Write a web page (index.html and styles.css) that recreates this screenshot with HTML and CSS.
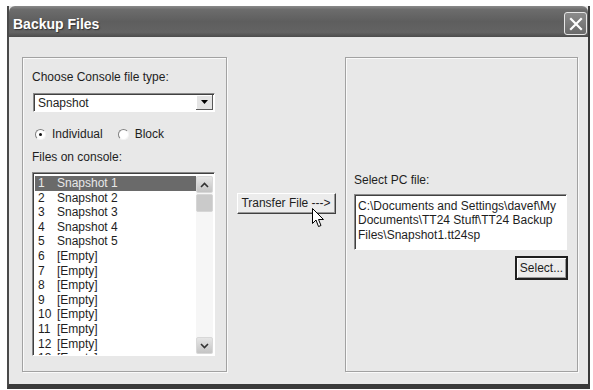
FILE: index.html
```html
<!DOCTYPE html>
<html>
<head>
  <title>Backup Files</title>
  <link rel="stylesheet" href="styles.css">
</head>
<body>
  <div class="window">
    <!-- Title bar -->
    <div class="titlebar">
      <span class="title">Backup Files</span>
      <div class="close-btn">
        <svg width="14" height="14" viewBox="0 0 14 14">
          <path d="M2 2 L12 12 M12 2 L2 12" stroke="#fff" stroke-width="2.2" stroke-linecap="square"/>
        </svg>
      </div>
    </div>

    <div class="client">
      <!-- LEFT: console files -->
      <div class="group left-group">
        <div class="label">Choose Console file type:</div>
        <div class="combo">
          <span class="combo-text">Snapshot</span>
          <span class="combo-btn">
            <svg width="7" height="4" viewBox="0 0 7 4"><path d="M0 0 H7 L3.5 4 Z" fill="#000"/></svg>
          </span>
        </div>

        <div class="radio-row">
          <span class="radio checked"></span><span class="radio-label">Individual</span>
          <span class="radio"></span><span class="radio-label">Block</span>
        </div>

        <div class="label files-label">Files on console:</div>
        <div class="listbox">
          <div class="list-rows">
            <div class="row selected"><span class="num">1</span>Snapshot 1</div>
            <div class="row"><span class="num">2</span>Snapshot 2</div>
            <div class="row"><span class="num">3</span>Snapshot 3</div>
            <div class="row"><span class="num">4</span>Snapshot 4</div>
            <div class="row"><span class="num">5</span>Snapshot 5</div>
            <div class="row"><span class="num">6</span>[Empty]</div>
            <div class="row"><span class="num">7</span>[Empty]</div>
            <div class="row"><span class="num">8</span>[Empty]</div>
            <div class="row"><span class="num">9</span>[Empty]</div>
            <div class="row"><span class="num">10</span>[Empty]</div>
            <div class="row"><span class="num">11</span>[Empty]</div>
            <div class="row"><span class="num">12</span>[Empty]</div>
            <div class="row"><span class="num">13</span>[Empty]</div>
          </div>
          <div class="scrollbar">
            <div class="sb-btn">
              <svg width="9" height="6" viewBox="0 0 9 6"><path d="M1 5 L4.5 1.5 L8 5" fill="none" stroke="#333" stroke-width="1.6"/></svg>
            </div>
            <div class="sb-thumb"></div>
            <div class="sb-track"></div>
            <div class="sb-btn">
              <svg width="9" height="6" viewBox="0 0 9 6"><path d="M1 1 L4.5 4.5 L8 1" fill="none" stroke="#333" stroke-width="1.6"/></svg>
            </div>
          </div>
        </div>
      </div>

      <!-- MIDDLE: transfer -->
      <div class="middle">
        <div class="button transfer-btn">Transfer File ---&gt;</div>
        <svg class="cursor" width="13" height="20" viewBox="0 0 13 20">
          <path d="M0.5 0.5 L0.5 15.5 L4 12 L6.5 18.5 L9 17.5 L6.5 11.5 L11.5 11.5 Z" fill="#fff" stroke="#000" stroke-width="1"/>
        </svg>
      </div>

      <!-- RIGHT: PC file -->
      <div class="group right-group">
        <div class="label">Select PC file:</div>
        <div class="textbox">C:\Documents and Settings\davef\My<br>Documents\TT24 Stuff\TT24 Backup<br>Files\Snapshot1.tt24sp</div>
        <div class="select-row">
          <div class="button select-btn">Select...</div>
        </div>
      </div>
    </div>
  </div>
</body>
</html>
```

FILE: styles.css
```css
body {
  margin: 0;
  background: #ffffff;
  font-family: "Liberation Sans", Arial, sans-serif;
  font-size: 12px;
  color: #1e1e1e;
  overflow: hidden;
}

.window {
  margin: 6px 3px 0 7px;
  width: 583px;
  background: #e8e8e8;
  border-left: 2px solid #4a4a4a;
  border-right: 2px solid #3a3a3a;
  border-bottom: 5px solid #3a3a3a;
  box-sizing: border-box;
}

/* Title bar */
.titlebar {
  height: 31px;
  display: flex;
  align-items: center;
  justify-content: space-between;
  padding: 0 1px 0 4px;
  background: linear-gradient(#8a8a8a 0%, #6c6c6c 12%, #5e5e5e 50%, #636363 85%, #4c4c4c 100%);
  border-radius: 6px 6px 0 0;
}

.title {
  font-weight: bold;
  font-size: 14px;
  color: #ffffff;
  text-shadow: 1px 1px 1px #333;
  padding-top: 5px;
}

.close-btn {
  width: 21px;
  height: 21px;
  margin-top: 4px;
  border: 1px solid #e6e6e6;
  border-radius: 3px;
  background: linear-gradient(#8c8c8c, #6a6a6a);
  display: flex;
  align-items: center;
  justify-content: center;
}

/* Dialog body */
.client {
  display: flex;
  padding: 20px 10px 12px 13px;
}

.group {
  border: 1px solid #a2a2a2;
  box-shadow: inset 1px 1px 0 #fafafa, 1px 1px 0 #fafafa;
  height: 315px;
  box-sizing: border-box;
}

.left-group {
  width: 205px;
  padding: 12px 11px 0 9px;
}

.label {
  line-height: 15px;
}

.combo {
  margin: 8px 0 0 1px;
  height: 19px;
  display: flex;
  background: #fff;
  border-top: 1px solid #8a8a8a;
  border-left: 1px solid #8a8a8a;
  border-right: 1px solid #fff;
  border-bottom: 1px solid #fff;
  box-shadow: inset 1px 1px 0 #404040;
  box-sizing: border-box;
}

.combo-text {
  flex: 1;
  padding: 2px 0 0 4px;
}

.combo-btn {
  width: 16px;
  margin: 1px 1px 1px 0;
  background: #e4e4e4;
  border-right: 1px solid #5a5a5a;
  border-bottom: 1px solid #5a5a5a;
  box-shadow: inset 1px 1px 0 #fff;
  display: flex;
  align-items: center;
  justify-content: center;
}

.radio-row {
  display: flex;
  align-items: center;
  margin: 14px 0 0 3px;
  height: 16px;
}

.radio {
  width: 11px;
  height: 11px;
  border-radius: 50%;
  background: #fff;
  border: 1px solid;
  border-color: #808080 #f4f4f4 #f4f4f4 #808080;
  box-sizing: border-box;
  position: relative;
}

.radio.checked::after {
  content: "";
  position: absolute;
  left: 3px;
  top: 3px;
  width: 3px;
  height: 3px;
  border-radius: 50%;
  background: #111;
}

.radio-label {
  margin: 0 15px 0 6px;
}

.files-label {
  margin-top: 8px;
}

/* File list */
.listbox {
  margin-top: 7px;
  height: 184px;
  display: flex;
  background: #fff;
  border-top: 1px solid #8a8a8a;
  border-left: 1px solid #8a8a8a;
  border-right: 1px solid #fff;
  border-bottom: 1px solid #fff;
  box-shadow: inset 1px 1px 0 #404040;
  box-sizing: border-box;
  overflow: hidden;
}

.list-rows {
  flex: 1;
  padding: 3px 0 0 2px;
}

.row {
  height: 14.6px;
  line-height: 14.6px;
  padding-left: 3px;
  white-space: nowrap;
}

.row.selected {
  background: #6a6a6a;
  color: #e8e8e8;
}

.num {
  display: inline-block;
  width: 19px;
}

.scrollbar {
  width: 17px;
  margin: 3px 1px 1px 0;
  display: flex;
  flex-direction: column;
  background: #f6f6f6;
}

.sb-btn {
  height: 17px;
  background: linear-gradient(#e6e6e6, #c4c4c4);
  border: 1px solid #d8d8d8;
  border-radius: 2px;
  box-sizing: border-box;
  display: flex;
  align-items: center;
  justify-content: center;
}

.sb-thumb {
  height: 16px;
  margin-top: 1px;
  background: #cacaca;
  border: 1px solid #d6d6d6;
  border-radius: 2px;
}

.sb-track {
  flex: 1;
}

/* Middle column */
.middle {
  width: 118px;
  position: relative;
  display: flex;
  justify-content: center;
  padding-top: 136px;
}

.button {
  background: #ececec;
  border: 1px solid;
  border-color: #fff #404040 #404040 #fff;
  box-shadow: inset -1px -1px 0 #9a9a9a;
  text-align: center;
  box-sizing: border-box;
}

.transfer-btn {
  width: 99px;
  height: 21px;
  line-height: 19px;
}

.cursor {
  position: absolute;
  left: 85px;
  top: 151px;
}

/* Right panel */
.right-group {
  width: 233px;
  padding: 115px 10px 0 8px;
}

.textbox {
  margin-top: 6px;
  height: 56px;
  padding: 4px 0 0 3px;
  line-height: 14.3px;
  background: #fff;
  border-top: 1px solid #8a8a8a;
  border-left: 1px solid #8a8a8a;
  border-right: 1px solid #fff;
  border-bottom: 1px solid #fff;
  box-shadow: inset 1px 1px 0 #404040;
  box-sizing: border-box;
  white-space: nowrap;
  overflow: hidden;
}

.select-row {
  display: flex;
  justify-content: flex-end;
  margin: 6px -1px 0 0;
}

.select-btn {
  width: 53px;
  height: 24px;
  line-height: 21px;
  border: 2px solid #202020;
  box-shadow: inset 1px 1px 0 #fff, inset -1px -1px 0 #9a9a9a;
}
```
